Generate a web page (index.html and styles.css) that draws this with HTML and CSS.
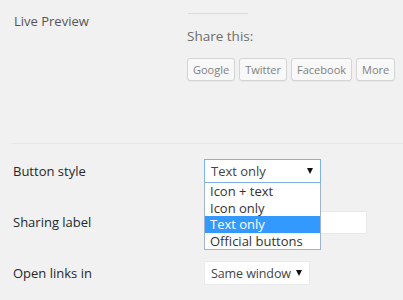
FILE: index.html
```html
<!DOCTYPE html>
<html>
<head>
<meta charset="utf-8">
<link rel="stylesheet" href="styles.css">
</head>
<body>
<div class="preview">
  <div class="preview-title">Live Preview</div>
  <div class="preview-body">
    <div class="rule"></div>
    <div class="share-title">Share this:</div>
    <div class="share-buttons">
      <span class="sbtn">Google</span>
      <span class="sbtn">Twitter</span>
      <span class="sbtn">Facebook</span>
      <span class="sbtn">More</span>
    </div>
  </div>
</div>
<div class="settings">
  <div class="row">
    <div class="label">Button style</div>
    <div class="control">
      <div class="select focused">
        <span class="value">Text only</span>
        <span class="arrow"></span>
      </div>
      <ul class="options">
        <li>Icon + text</li>
        <li>Icon only</li>
        <li class="selected">Text only</li>
        <li>Official buttons</li>
      </ul>
    </div>
  </div>
  <div class="row">
    <div class="label">Sharing label</div>
    <div class="control">
      <div class="textinput"></div>
    </div>
  </div>
  <div class="row">
    <div class="label">Open links in</div>
    <div class="control">
      <div class="select plain">
        <span class="value">Same window</span>
        <span class="arrow"></span>
      </div>
    </div>
  </div>
</div>
</body>
</html>
```

FILE: styles.css
```css
html, body {
  margin: 0;
  padding: 0;
  background: #f1f1f1;
  font-family: "Open Sans", "Noto Sans", sans-serif;
  font-size: 13px;
  color: #23282d;
}
.preview {
  display: flex;
  height: 143px;
}
.preview-title {
  width: 173px;
  padding-left: 14px;
  padding-top: 12px;
  font-size: 13px;
  color: #555;
  line-height: 18px;
}
.preview-body {
  padding-top: 13px;
}
.rule {
  width: 60px;
  margin-left: 1px;
  height: 1px;
  background: #dcdcdc;
}
.share-title {
  margin-top: 13px;
  font-size: 13.5px;
  line-height: 18px;
  color: #6d6d6d;
}
.share-buttons {
  display: flex;
  gap: 4px;
  margin-top: 13px;
}
.sbtn {
  display: block;
  height: 21px;
  line-height: 21px;
  padding: 0 5px;
  border: 1px solid #d4d4d4;
  border-radius: 3px;
  background: #f8f8f8;
  font-size: 11px;
  color: #808080;
  box-shadow: 0 1px 1px rgba(0,0,0,0.04);
}
.settings {
  margin-left: 12px;
  border-top: 1px solid #e6e6e6;
  padding-top: 15px;
}
.row {
  display: flex;
  align-items: center;
  height: 24px;
  margin-bottom: 27px;
}
.label {
  width: 191px;
  padding-left: 1px;
  font-size: 13px;
  color: #23282d;
}
.control {
  position: relative;
}
.select {
  box-sizing: border-box;
  display: flex;
  align-items: center;
  justify-content: space-between;
  height: 24px;
  background: #fff;
  padding: 0 5px 0 6px;
  color: #444;
  font-size: 13px;
  white-space: nowrap;
}
.select.focused {
  width: 117px;
  border: 1px solid #7fb2e5;
}
.select.plain {
  width: 106px;
  border: 1px solid #eaeaea;
  padding-left: 6px;
  padding-right: 5px;
  font-size: 12.5px;
  letter-spacing: -0.1px;
}
.arrow {
  flex-shrink: 0;
  width: 0;
  height: 0;
  border-left: 3px solid transparent;
  border-right: 3px solid transparent;
  border-top: 6px solid #111;
  margin-right: 2px;
  margin-left: 4px;
}
.options {
  position: absolute;
  left: 0;
  top: 24px;
  box-sizing: border-box;
  width: 117px;
  margin: 0;
  padding: 0;
  list-style: none;
  background: #fff;
  border: 1px solid #9fb3cc;
  border-top: none;
  z-index: 2;
}
.options li {
  height: 16.5px;
  line-height: 16.5px;
  padding-left: 5px;
  font-size: 13px;
  color: #333;
}
.options li.selected {
  background: #3399ff;
  color: #fff;
}
.textinput {
  box-sizing: border-box;
  width: 163px;
  height: 23px;
  background: #fff;
  border: 1px solid #e8e8e8;
}
```
